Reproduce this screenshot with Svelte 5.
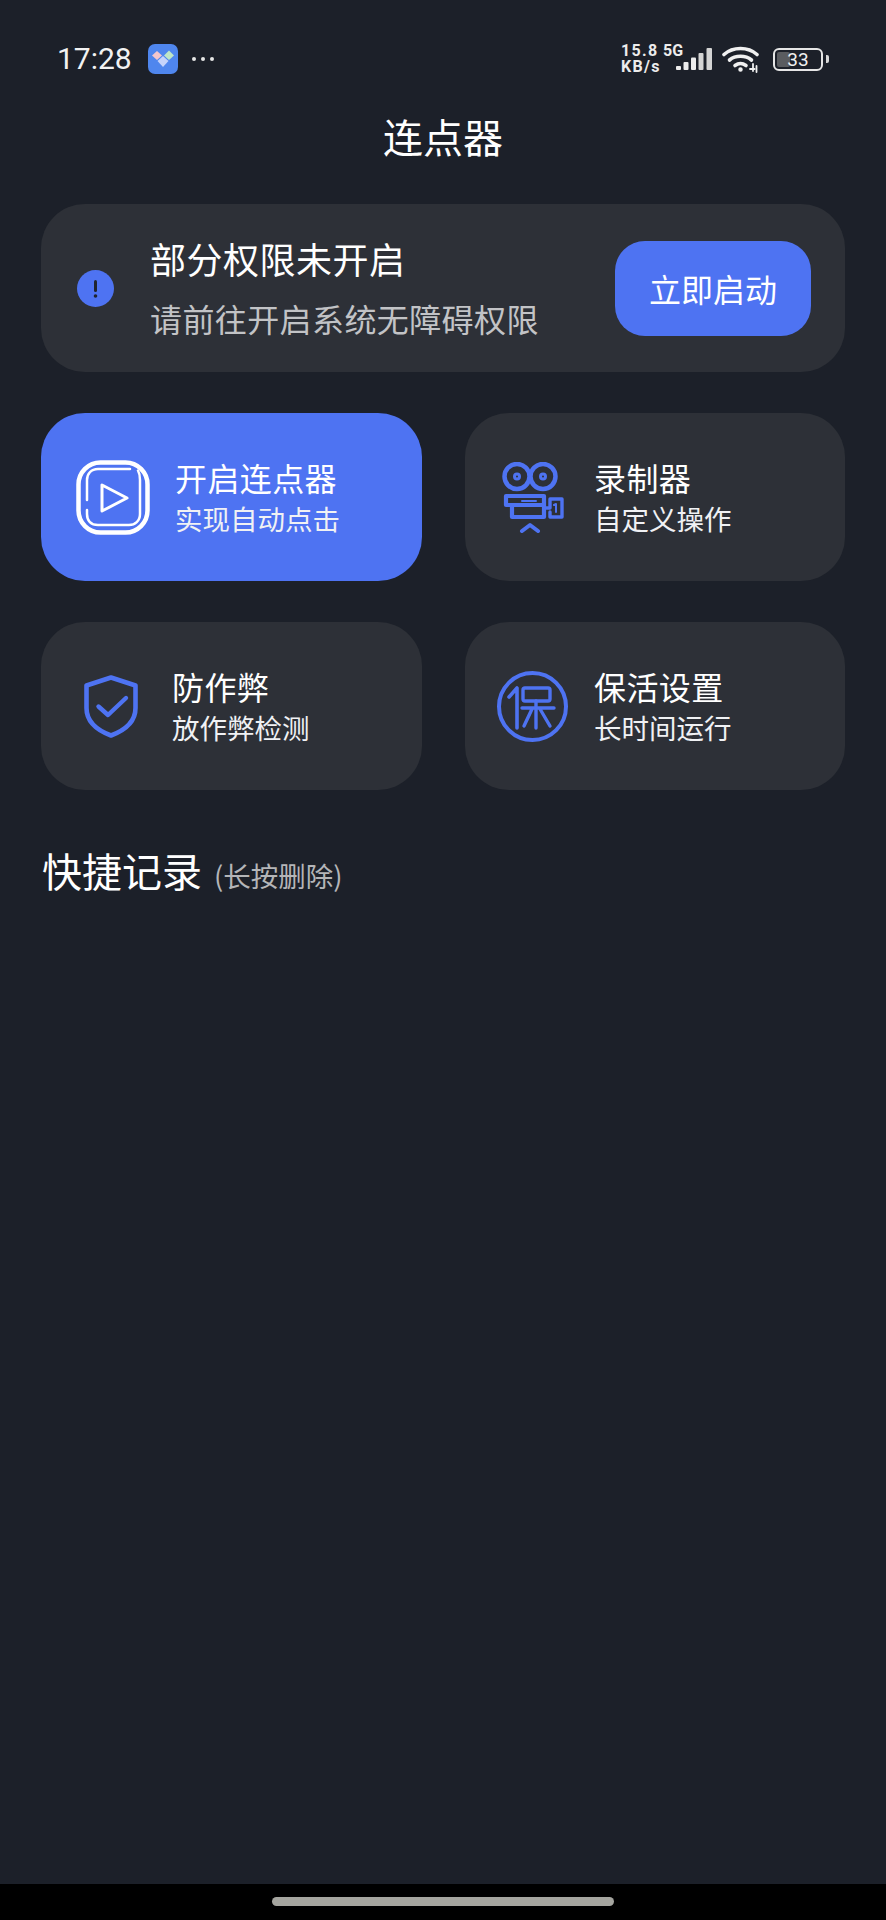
<script>
  const cards = [
    { id: 'play', active: true, title: '开启连点器', sub: '实现自动点击' },
    { id: 'cam', title: '录制器', sub: '自定义操作' },
    { id: 'shield', title: '防作弊', sub: '放作弊检测' },
    { id: 'bao', title: '保活设置', sub: '长时间运行' }
  ];
</script>

<div class="screen">
  <header class="status">
    <div class="status-left">
      <span class="time">17:28</span>
      <svg class="app" viewBox="0 0 30 30" width="30" height="30">
        <rect width="30" height="30" rx="7" fill="#4f86ee" />
        <path d="M4 11.500 9 7l5 4.500L9 16z" fill="#f4c6cc" />
        <path d="M16 11.500 21 6.500l5 5-5 4.500z" fill="#bfe6c6" />
        <path d="M9.500 17 15 12l5.500 5L15 23z" fill="#c5d3fb" />
      </svg>
      <span class="dots"><i></i><i></i><i></i></span>
    </div>
    <div class="status-right">
      <span class="speed">15.8<br />KB/s</span>
      <span class="net">
        <span class="fiveg">5G</span>
        <svg class="signal" viewBox="0 0 36 24" width="36" height="24">
          <rect x="0" y="19" width="5" height="4" rx="1" fill="#ececec" />
          <rect x="7.500" y="15" width="5" height="8" rx="1" fill="#ececec" />
          <rect x="15" y="10.500" width="5" height="12.500" rx="1" fill="#ececec" />
          <rect x="22.500" y="6" width="5" height="17" rx="1" fill="#d4d4d4" />
          <rect x="30.500" y="1" width="5.500" height="22" rx="1" fill="#d4d4d4" />
        </svg>
      </span>
      <svg class="wifi" viewBox="0 0 38 28" width="38" height="28" fill="none" stroke="#f0f0f0" stroke-width="3.600" stroke-linecap="round">
        <path d="M2 9.500c9-8 24-8 33 0" />
        <path d="M7.500 15c6-5 16-5 22 0" />
        <path d="M13 20.500c3.500-2.500 7.500-2.500 11 0" />
        <circle cx="18.500" cy="24.500" r="1.500" fill="#f0f0f0" stroke-width="1.500" />
        <path d="M31 19v7M28 24h4.500M34.500 21v6" stroke-width="1.800" />
      </svg>
      <span class="battery">
        <span class="level"></span>
        <span class="pct">33</span>
      </span>
      <span class="tip"></span>
    </div>
  </header>

  <h1 class="title">连点器</h1>

  <section class="notice">
    <span class="alert"><svg viewBox="0 0 37 37" width="37" height="37">
      <circle cx="18.500" cy="18.500" r="18.500" fill="#4e73f2" />
      <rect x="17" y="10" width="3" height="12" rx="1.500" fill="#20242e" />
      <circle cx="18.500" cy="26" r="1.800" fill="#20242e" />
    </svg></span>
    <div class="notice-text">
      <div class="notice-title">部分权限未开启</div>
      <div class="notice-sub">请前往开启系统无障碍权限</div>
    </div>
    <button class="start">立即启动</button>
  </section>

  <section class="grid">
    {#each cards as c}
      <div class="card {c.id}" class:active={c.active}>
        {#if c.id === 'play'}
          <svg viewBox="0 0 74 75" width="74" height="75" fill="none" stroke="#fff" stroke-linecap="round" stroke-linejoin="round">
            <rect x="2.500" y="2.500" width="69" height="70" rx="22" stroke-width="4.500" />
            <path d="M62 10.500Q64 14 64 20v34c0 7-5 11-11 11H22c-7 0-11-4-11-11V50M11 40V20c0-6 4-11 11-11h32" stroke-width="2.500" />
            <path d="M26 25v26L51 38z" stroke-width="3" />
          </svg>
        {:else if c.id === 'cam'}
          <svg viewBox="0 0 62 71" width="62" height="71" fill="none" stroke="#4e73f2" stroke-linecap="round" stroke-linejoin="round">
            <circle cx="15" cy="14.500" r="12.500" stroke-width="4.500" />
            <circle cx="41" cy="14.500" r="12.500" stroke-width="4.500" />
            <circle cx="15" cy="14.500" r="2.500" stroke-width="3" />
            <circle cx="41" cy="14.500" r="2.500" stroke-width="3" />
            <path d="M4 34h38v9H4zM10 43v12h32V34" stroke-width="4.200" />
            <path d="M42 46h6v-9h12v18H48v-5" stroke-width="3.400" />
            <path d="M20 39h14M52 43l2-1v8" stroke-width="2" />
            <path d="M20 69l8-6 8 6" stroke-width="4" />
          </svg>
        {:else if c.id === 'shield'}
          <svg viewBox="0 0 54 63" width="54" height="63" fill="none" stroke="#4e73f2" stroke-linecap="round" stroke-linejoin="round">
            <path d="M27 2.500 51.500 10.500V33c0 15-12.500 23-24.500 27.500C15 56 2.500 48 2.500 33V10.500z" stroke-width="4.600" />
            <path d="M14.500 31.500 24 40l18-17" stroke-width="4.400" />
          </svg>
        {:else}
          <svg viewBox="0 0 71 71" width="71" height="71" fill="none" stroke="#4e73f2" stroke-linecap="round" stroke-linejoin="round">
            <circle cx="35.500" cy="35.500" r="33.500" stroke-width="4" />
            <path d="M12 26 20 17V57" stroke-width="3.600" />
            <rect x="26" y="17" width="27" height="13" rx="2" stroke-width="3.400" />
            <path d="M25 37h32M39 30v27M35 38 27 55M43 38l10 17" stroke-width="3.400" />
          </svg>
        {/if}
        <div class="card-text">
          <div class="card-title">{c.title}</div>
          <div class="card-sub">{c.sub}</div>
        </div>
      </div>
    {/each}
  </section>

  <h2 class="records">快捷记录<span>(长按删除)</span></h2>

  <footer class="nav"><span class="pill"></span></footer>
</div>

<style>
  :global(body) {
    margin: 0;
    background: #1c2029;
  }
  .screen {
    width: 886px;
    height: 1920px;
    background: #1c2029;
    display: flex;
    flex-direction: column;
    color: #fff;
    font-family: "Noto Sans CJK SC", "Noto Sans", sans-serif;
    overflow: hidden;
  }
  .status {
    height: 60px;
    margin-top: 29px;
    padding: 0 57px;
    display: flex;
    justify-content: space-between;
    align-items: center;
    flex: none;
    box-sizing: border-box;
  }
  .status-left {
    display: flex;
    align-items: center;
  }
  .time {
    font: 400 30px/40px Roboto, sans-serif;
    color: #f2f2f2;
  }
  .app {
    margin-left: 16px;
  }
  .dots {
    display: flex;
    gap: 5px;
    margin-left: 14px;
  }
  .dots i {
    width: 4px;
    height: 4px;
    border-radius: 50%;
    background: #e6e6e6;
  }
  .status-right {
    display: flex;
    align-items: center;
  }
  .speed {
    font: 700 16px/16px Roboto, sans-serif;
    letter-spacing: 1.300px;
    color: #ececec;
    width: 42px;
  }
  .net {
    position: relative;
    width: 49px;
    height: 32px;
  }
  .fiveg {
    position: absolute;
    left: 0;
    top: -1px;
    font: 700 16px/18px Roboto, sans-serif;
    color: #ececec;
  }
  .signal {
    position: absolute;
    left: 13px;
    top: 4px;
  }
  .wifi {
    margin-left: 10px;
  }
  .battery {
    position: relative;
    margin-left: 13px;
    width: 50px;
    height: 23px;
    box-sizing: border-box;
    border: 2px solid #e6e6e6;
    border-radius: 6px;
    display: flex;
    align-items: center;
    justify-content: center;
    overflow: hidden;
  }
  .level {
    position: absolute;
    left: 2px;
    top: 2px;
    bottom: 2px;
    width: 13px;
    background: #5a5c60;
    border-radius: 2px;
  }
  .pct {
    position: relative;
    font: 400 19px/19px Roboto, sans-serif;
    color: #f0f0f0;
  }
  .tip {
    width: 3px;
    height: 8px;
    margin-left: 3px;
    background: #d8d8d8;
    border-radius: 0 2px 2px 0;
  }
  .title {
    margin: 11px 0 0;
    height: 72px;
    text-align: center;
    font-size: 40px;
    line-height: 72px;
    font-weight: 400;
    flex: none;
  }
  .notice {
    margin: 32px 41px 0;
    height: 168px;
    flex: none;
    background: #2d3037;
    border-radius: 44px;
    display: flex;
    align-items: center;
    padding: 0 34px 0 36px;
  }
  .alert {
    display: flex;
    flex: none;
    margin-right: 36px;
  }
  .notice-text {
    flex: 1;
    display: flex;
    flex-direction: column;
    gap: 16px;
    margin-top: -2px;
  }
  .notice-title {
    font-size: 36px;
    line-height: 46px;
    letter-spacing: 0.5px;
  }
  .notice-sub {
    font-size: 32px;
    line-height: 42px;
    letter-spacing: 0.4px;
    color: #c2c3c6;
  }
  .start {
    width: 196px;
    height: 95px;
    border: 0;
    border-radius: 30px;
    background: #4e73f2;
    color: #fff;
    font-family: inherit;
    font-size: 32px;
    flex: none;
    padding: 0;
  }
  .grid {
    margin: 41px 41px 0;
    display: grid;
    grid-template-columns: 381px 380px;
    grid-auto-rows: 168px;
    column-gap: 43px;
    row-gap: 41px;
    flex: none;
  }
  .card {
    background: #2d3037;
    border-radius: 44px;
    display: flex;
    align-items: center;
    box-sizing: border-box;
  }
  .card svg {
    flex: none;
  }
  .card.active {
    background: #4e73f2;
  }
  .card.play {
    padding-left: 35px;
    gap: 25px;
  }
  .card.cam {
    padding-left: 37px;
    gap: 30px;
  }
  .card.shield {
    padding-left: 43px;
    gap: 34px;
  }
  .card.bao {
    padding-left: 32px;
    gap: 26px;
  }
  .card-text {
    display: flex;
    flex-direction: column;
    gap: 2px;
    margin-top: -1px;
  }
  .card-title {
    font-size: 32px;
    line-height: 40px;
    letter-spacing: 0.4px;
  }
  .card-sub {
    font-size: 27.500px;
    line-height: 38px;
    color: #f0f1f4;
  }
  .records {
    margin: 52px 0 0 42px;
    font-size: 40px;
    line-height: 56px;
    font-weight: 400;
    flex: none;
    display: flex;
    align-items: baseline;
  }
  .records span {
    font-size: 27.500px;
    color: #b4b5b8;
    margin-left: 12px;
  }
  .nav {
    margin-top: auto;
    height: 36px;
    background: #000;
    flex: none;
    display: flex;
    justify-content: center;
    padding-top: 13px;
    box-sizing: border-box;
  }
  .pill {
    width: 342px;
    height: 9px;
    border-radius: 5px;
    background: #a5a59f;
  }
</style>
